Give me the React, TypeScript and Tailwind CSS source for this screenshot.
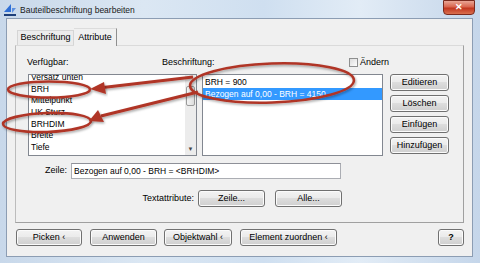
import React from 'react'

const Btn = ({ children, className }: any) => (
    <div
        className={`flex items-center justify-center rounded-[3px] border border-[#707070] bg-[linear-gradient(#f3f3f3,#ebebeb_45%,#dddddd_50%,#cfcfcf)] shadow-[inset_0_0_0_1px_#fbfbfb] text-[9px] text-black ${className}`}
    >
        {children}
    </div>
)

const available = ['Versatz unten', 'BRH', 'Mittelpunkt', 'UK Sturz', 'BRHDIM', 'Breite', 'Tiefe', 'Höhe']

const App = () => {
    return (
        <div className="relative w-[480px] h-[263px] overflow-hidden bg-[linear-gradient(90deg,#c8d8ea,#dbe7f3_30%,#cfdff0_55%,#e2ecf6_75%,#c5d6ea)] font-['Liberation_Sans',Arial,sans-serif] text-black">
            {/* title bar */}
            <div className="flex h-[18px] items-center">
                <svg width="14" height="14" viewBox="0 0 14 14" className="ml-[3px] mt-[2px]">
                    <path d="M1 9 L8 1 L8 9 Z" fill="#2f6fd6" />
                    <path d="M1 11 L13 11 L13 13 L1 13 Z" fill="#1d3f7a" />
                    <path d="M9 5 L13 5 L9 10 Z" fill="#5b8fe0" />
                </svg>
                <span className="ml-[3px] mt-[2px] text-[8.5px] text-[#1a1a1a]">Bauteilbeschriftung bearbeiten</span>
                <div className="ml-auto mr-[5px] mb-[3px] flex h-[15px] w-[32px] items-center justify-center rounded-b-[4px] border border-[#7a2a1e] bg-[linear-gradient(#e9a595,#d9654e_45%,#c2361f_55%,#d9704f)] text-[9px] font-bold text-white">
                    ✕
                </div>
            </div>

            {/* client area */}
            <div className="ml-[6px] flex h-[239px] w-[467px] flex-col border border-[#8c9db3] bg-[#f0f0f0]">
                {/* tabs */}
                <div className="ml-[10px] mt-[9px] flex h-[17px] items-end text-[9px]">
                    <div className="flex h-[15px] w-[57px] items-center justify-center border border-b-0 border-[#d5d5d5] bg-[#ececec]">
                        Beschriftung
                    </div>
                    <div className="relative z-10 -mb-px flex h-[18px] w-[43px] items-center justify-center border border-b-0 border-l-0 border-t-[#dcdcdc] border-r-[#8f8f8f] bg-[#f0f0f0]">
                        Attribute
                    </div>
                </div>

                {/* panel */}
                <div className="ml-[8px] flex h-[178px] w-[449px] flex-col border border-[#a0a0a0] border-t-[#dadada] border-l-[#bcbcbc] pl-[11px] pt-[11px] text-[9px]">
                    <div className="flex h-[11px] items-center">
                        <span className="w-[135px]">Verfügbar:</span>
                        <span className="w-[187px]">Beschriftung:</span>
                        <span className="flex items-center gap-[2px]">
                            <span className="h-[9px] w-[9px] border border-[#8e8f8f] bg-[linear-gradient(135deg,#dcdcdc,#fefefe)]" />
                            Ändern
                        </span>
                    </div>

                    <div className="mt-[6px] flex h-[82px] text-[8.5px]">
                        <div className="ml-[1px] flex h-full w-[169px] border border-[#828790] bg-white">
                            <div className="flex-1 overflow-hidden">
                                <div className="-mt-[3px] pl-[2px]">
                                    {available.map((a) => (
                                        <div key={a} className="h-[11.7px] leading-[11.7px]">
                                            {a}
                                        </div>
                                    ))}
                                </div>
                            </div>
                            <div className="flex w-[11px] flex-col bg-[#ececec]">
                                <div className="h-[11px]" />
                                <div className="mx-[1px] h-[20px] rounded-[2px] border border-[#9a9a9a] bg-[linear-gradient(90deg,#f4f4f4,#dcdcdc)]" />
                                <div className="flex-1" />
                                <div className="flex h-[11px] items-center justify-center text-[6px] text-[#444]">▼</div>
                            </div>
                        </div>
                        <div className="ml-[5px] flex h-full w-[181px] flex-col border border-[#828790] bg-white pt-[1px]">
                            <div className="h-[12px] pl-[2px] leading-[12px]">BRH = 900</div>
                            <div className="h-[12px] bg-[#3399ff] pl-[2px] leading-[12px] text-white">Bezogen auf 0,00 - BRH = 4150</div>
                        </div>
                        <div className="ml-[7px] flex flex-col gap-[4px]">
                            <Btn className="h-[17px] w-[59px]">Editieren</Btn>
                            <Btn className="h-[17px] w-[59px]">Löschen</Btn>
                            <Btn className="h-[17px] w-[59px]">Einfügen</Btn>
                            <Btn className="h-[17px] w-[59px]">Hinzufügen</Btn>
                        </div>
                    </div>

                    <div className="mt-[7px] flex h-[16px] items-center pl-[18px]">
                        <span>Zeile:</span>
                        <div className="ml-[4px] flex h-[16px] w-[270px] items-center border border-[#abadb3] border-t-[#8e9098] bg-white pl-[2px] text-[8.5px]">
                            Bezogen auf 0,00 - BRH = &lt;BRHDIM&gt;
                        </div>
                    </div>

                    <div className="mt-[11px] flex h-[17px] items-center">
                        <span className="w-[167px] shrink-0 text-right">Textattribute:</span>
                        <Btn className="ml-[4px] h-[17px] w-[67px]">Zeile...</Btn>
                        <Btn className="ml-[10px] h-[17px] w-[67px]">Alle...</Btn>
                    </div>
                </div>

                {/* bottom buttons */}
                <div className="ml-[9px] mt-[6px] flex h-[17px] items-center">
                    <Btn className="h-[17px] w-[66px]">Picken ‹</Btn>
                    <Btn className="ml-[8px] h-[17px] w-[67px]">Anwenden</Btn>
                    <Btn className="ml-[7px] h-[17px] w-[68px]">Objektwahl ‹</Btn>
                    <Btn className="ml-[8px] h-[17px] w-[97px]">Element zuordnen ‹</Btn>
                    <Btn className="ml-auto mr-[8px] h-[17px] w-[26px] font-bold">?</Btn>
                </div>
            </div>

            {/* red annotations */}
            <svg className="pointer-events-none absolute left-0 top-0" width="480" height="263" viewBox="0 0 480 263">
                <defs>
                    <filter id="sh" x="-10%" y="-10%" width="120%" height="130%">
                        <feDropShadow dx="1" dy="1.5" stdDeviation="1" floodColor="#000" floodOpacity="0.35" />
                    </filter>
                </defs>
                <g filter="url(#sh)" stroke="#b03628" fill="none" strokeWidth="2.6">
                    <ellipse cx="49" cy="89.5" rx="41" ry="8" />
                    <ellipse cx="47" cy="122.5" rx="44" ry="9.5" transform="rotate(-2 47 122.5)" />
                    <ellipse cx="272" cy="83" rx="82" ry="19.5" transform="rotate(-2 272 83)" />
                    <line x1="193" y1="77" x2="103" y2="87.5" strokeWidth="3" />
                    <line x1="198" y1="92" x2="101" y2="116" strokeWidth="3" />
                </g>
                <g filter="url(#sh)" fill="#b03628">
                    <path d="M90 89 L104 82 L106 94 Z" />
                    <path d="M89 121 L98 110 L104 122 Z" />
                </g>
            </svg>
        </div>
    )
}

export default App
